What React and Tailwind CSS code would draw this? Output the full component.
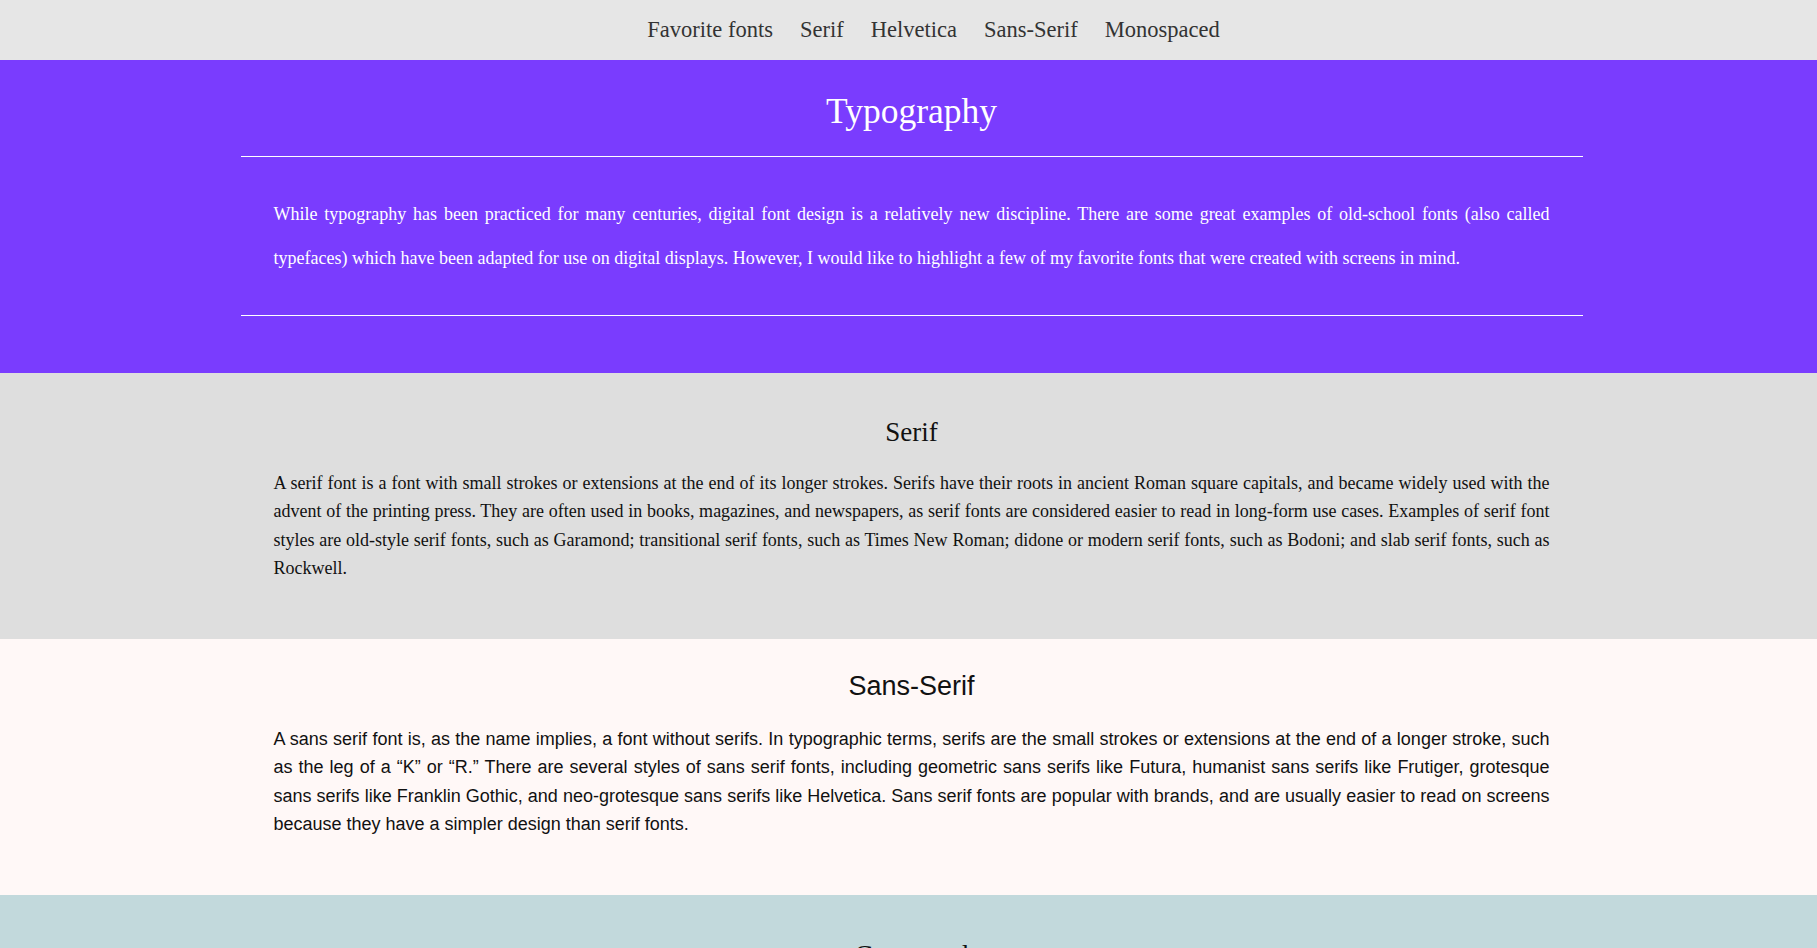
const serif = "font-['Liberation_Serif','Times_New_Roman',serif]";
const sans = "font-['Liberation_Sans',Arial,sans-serif]";

const navLinks = ["Favorite fonts", "Serif", "Helvetica", "Sans-Serif", "Monospaced"];

// One font section: heading + justified paragraph
function FontSection({ title, bg, font, pad, gap, children }) {
  return (
    <section className={`${bg} ${pad} pl-[6px]`}>
      <div className={`mx-auto max-w-[1342px] px-[33px] text-[#111] ${font}`}>
        <h2 className="text-center text-[27px] leading-[31px]">{title}</h2>
        <p className={`${gap} text-justify text-[18px] leading-[28.3px]`}>{children}</p>
      </div>
    </section>
  );
}

export default function App() {
  return (
    <div className={`min-h-screen bg-white ${serif}`}>
      {/* Top nav */}
      <nav className="flex h-[60px] items-center justify-center bg-[#e6e6e6]">
        <ul className="flex gap-[27px] pl-[50px]">
          {navLinks.map((l) => (
            <li key={l}>
              <a href="#" className="text-[22.5px] text-[#333]">
                {l}
              </a>
            </li>
          ))}
        </ul>
      </nav>

      {/* Hero */}
      <header className="bg-[#7a3cfe] pt-[31px] pb-[57px] pl-[6px] text-white">
        <div className="mx-auto max-w-[1342px]">
          <h1 className="text-center text-[35.5px] leading-[41px]">Typography</h1>
          <hr className="mt-[24px] border-t border-white" />
          <p className="mt-[35px] mb-[35px] px-[33px] text-justify text-[18px] leading-[44px]">
            While typography has been practiced for many centuries, digital font design is a
            relatively new discipline. There are some great examples of old-school fonts (also
            called typefaces) which have been adapted for use on digital displays. However, I would
            like to highlight a few of my favorite fonts that were created with screens in mind.
          </p>
          <hr className="border-t border-white" />
        </div>
      </header>

      <FontSection
        title="Serif"
        bg="bg-[#dedede]"
        font={serif}
        pad="pt-[44px] pb-[57px]"
        gap="mt-[21px]"
      >
        A serif font is a font with small strokes or extensions at the end of its longer strokes.
        Serifs have their roots in ancient Roman square capitals, and became widely used with the
        advent of the printing press. They are often used in books, magazines, and newspapers, as
        serif fonts are considered easier to read in long-form use cases. Examples of serif font
        styles are old-style serif fonts, such as Garamond; transitional serif fonts, such as Times
        New Roman; didone or modern serif fonts, such as Bodoni; and slab serif fonts, such as
        Rockwell.
      </FontSection>

      <FontSection
        title="Sans-Serif"
        bg="bg-[#fff8f7]"
        font={sans}
        pad="pt-[32px] pb-[57px]"
        gap="mt-[23px]"
      >
        A sans serif font is, as the name implies, a font without serifs. In typographic terms,
        serifs are the small strokes or extensions at the end of a longer stroke, such as the leg of
        a “K” or “R.” There are several styles of sans serif fonts, including geometric sans serifs
        like Futura, humanist sans serifs like Frutiger, grotesque sans serifs like Franklin Gothic,
        and neo-grotesque sans serifs like Helvetica. Sans serif fonts are popular with brands, and
        are usually easier to read on screens because they have a simpler design than serif fonts.
      </FontSection>

      <FontSection
        title="Garamond"
        bg="bg-[#c2d9dc]"
        font={serif}
        pad="pt-[45px] pb-[56px]"
        gap="mt-[21px]"
      >
        Garamond is a group of many serif typefaces, named for sixteenth-century Parisian engraver
        Claude Garamond. Garamond-style typefaces are popular and often used, particularly for
        printing body text and books.
      </FontSection>
    </div>
  );
}
